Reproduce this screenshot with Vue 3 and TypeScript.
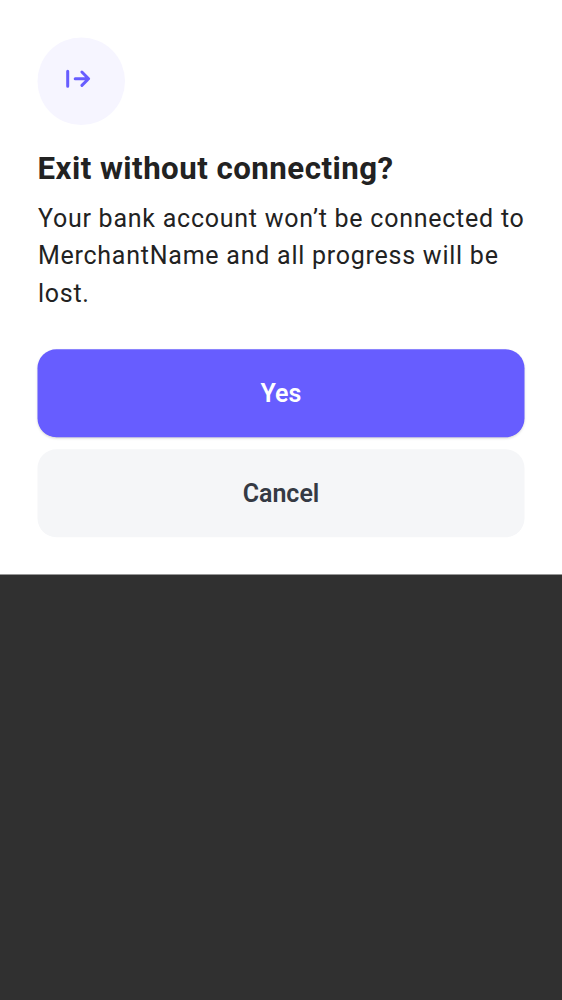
<script setup lang="ts">
const title: string = 'Exit without connecting?'
const merchant: string = 'MerchantName'
</script>

<template>
  <main class="screen">
    <section class="sheet">
      <svg class="badge" viewBox="0 0 88 88" fill="none">
        <circle cx="44.25" cy="44.25" r="43.75" fill="#f6f5ff" />
        <path
          d="M30.7 34.2V49.2M38.2 41.7H51.3M44.9 35L51.6 41.7L44.9 48.4"
          stroke="#675dff"
          stroke-width="3"
          stroke-linecap="round"
          stroke-linejoin="round"
        />
      </svg>
      <h1>{{ title }}</h1>
      <p>Your bank account won’t be connected to<br />{{ merchant }} and all progress will be<br />lost.</p>
      <div class="actions">
        <button class="primary" type="button">Yes</button>
        <button class="secondary" type="button">Cancel</button>
      </div>
    </section>
  </main>
</template>

<style>
body {
  margin: 0;
  background: #303030;
}
</style>

<style scoped>
.screen {
  height: 1000px;
  background: #303030;
  font-family: Roboto, sans-serif;
}
.sheet {
  box-sizing: border-box;
  height: 575px;
  padding: 37px 38px 0;
  border-bottom: 1px solid #979797;
  background: #fff;
}
.badge {
  display: block;
  width: 88px;
  height: 88px;
  margin-left: -1px;
}
h1 {
  margin: 25px 0 0 -0.5px;
  font-size: 31.25px;
  font-weight: 700;
  line-height: 37.5px;
  letter-spacing: 0.47px;
  white-space: nowrap;
  color: #222;
}
p {
  margin: 12px 0 0 -0.1px;
  font-size: 25px;
  line-height: 37.5px;
  letter-spacing: 0.755px;
  white-space: nowrap;
  color: #222;
}
.actions {
  display: grid;
  gap: 13px;
  margin-top: 38px;
}
button {
  height: 87px;
  padding: 0;
  border: 0;
  border-radius: 18.5px;
  font: 600 25px/37.5px Roboto, sans-serif;
  letter-spacing: 0;
}
.primary {
  background: #675dff;
  color: #fff;
  box-shadow:
    0 -0.25px 0 0.5px #675dff,
    0 1px 3px rgba(0, 0, 0, 0.22);
}
.secondary {
  background: #f5f6f8;
  color: #353a44;
  box-shadow: 0 -0.25px 0 0.5px #f5f6f8;
}
</style>
